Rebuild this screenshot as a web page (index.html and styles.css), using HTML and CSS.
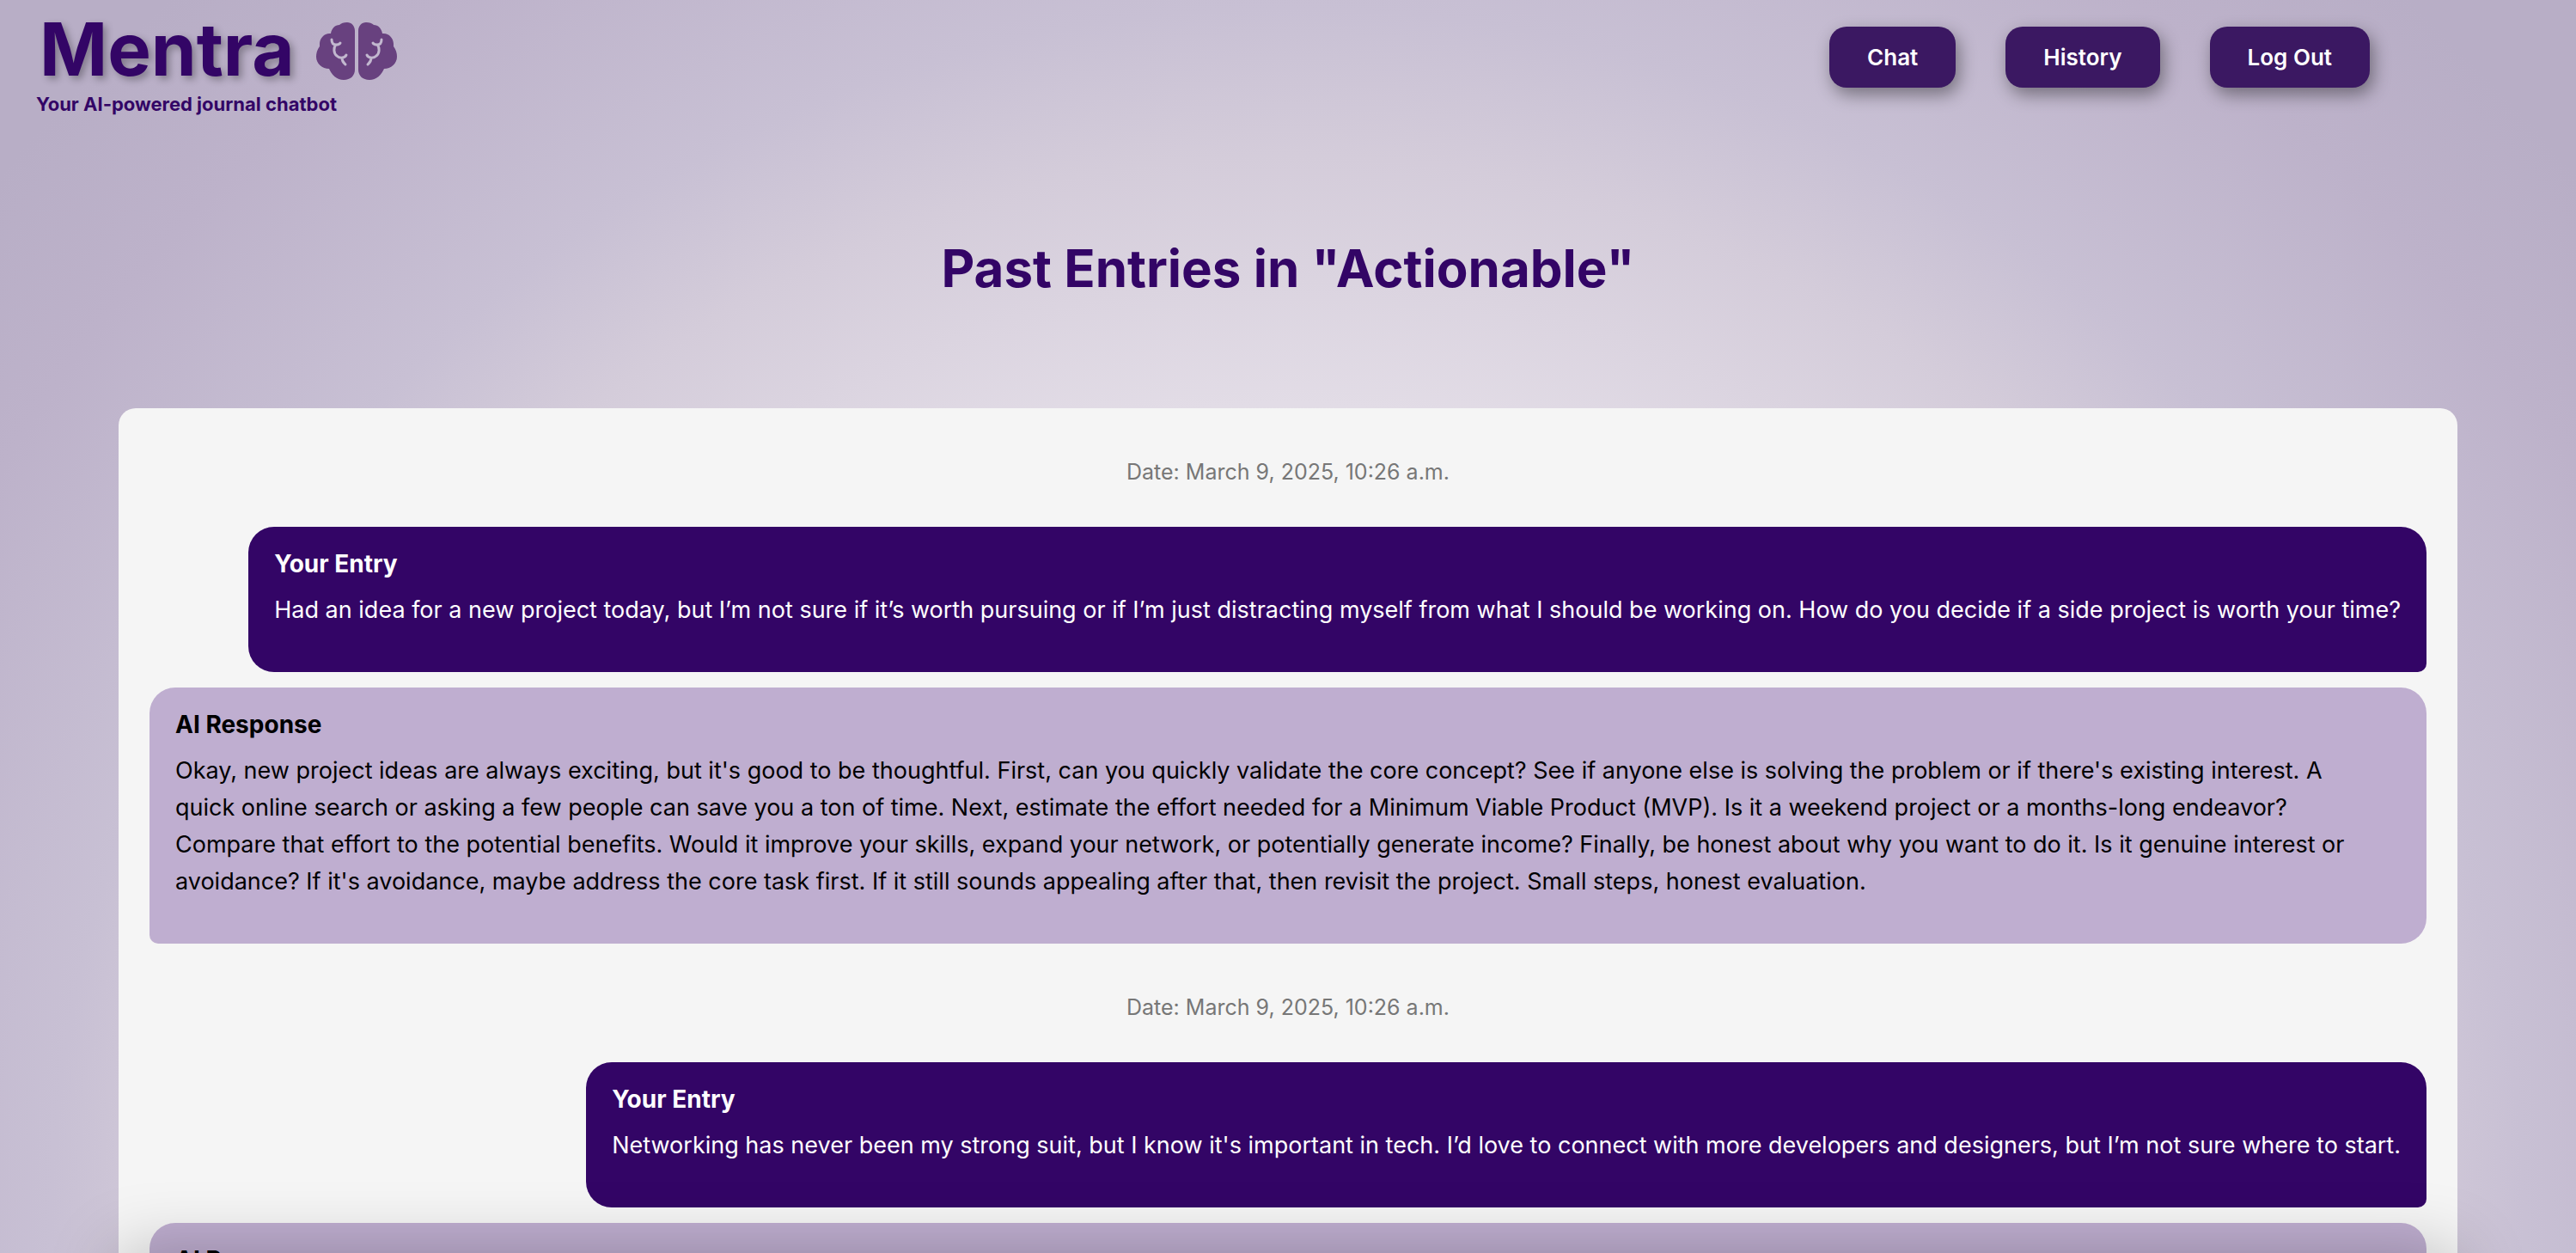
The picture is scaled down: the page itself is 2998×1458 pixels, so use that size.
FILE: index.html
```html
<!DOCTYPE html>
<html lang="en">
<head>
<meta charset="utf-8">
<meta name="viewport" content="width=device-width, initial-scale=1">
<title>Mentra</title>
<link rel="stylesheet" href="styles.css">
</head>
<body>
<header class="site-header">
  <div class="brand">
    <div class="brand-row">
      <span class="brand-name">Mentra</span>
      <svg class="brand-icon" viewBox="0 0 96 70" aria-hidden="true">
        <g id="half">
          <path fill="#68417f" d="M46 11C46 5 42 1 37 1C33 1 30 2 28 4C23 4 19 8 18 14C11 13 5 19 5 26V29C2 33 1 37 1 41C1 49 8 55 16 55C19 62 25 68 33 68C41 68 46 63 46 56Z"/>
          <path class="fold" d="M19 21C19 25 21 27 24 27C26 27 28 27 29 25M24 27C21 30 21 37 25 40C28 43 34 43 36 39M31 42C31 47 33 48 35 50"/>
        </g>
        <use href="#half" transform="translate(96 0) scale(-1 1)"/>
      </svg>
    </div>
    <p class="tagline">Your AI-powered journal chatbot</p>
  </div>
  <nav class="site-nav">
    <a class="nav-link" href="#">Chat</a>
    <a class="nav-link" href="#">History</a>
    <a class="nav-link" href="#">Log Out</a>
  </nav>
</header>
<main class="page">
  <h1 class="page-title">Past Entries in "Actionable"</h1>
  <section class="entries">
    <p class="date">Date: March 9, 2025, 10:26 a.m.</p>
    <article class="bubble bubble-user">
      <h2 class="bubble-title">Your Entry</h2>
      <p class="bubble-text">Had an idea for a new project today, but I’m not sure if it’s worth pursuing or if I’m just distracting myself from what I should be working on. How do you decide if a side project is worth your time?</p>
    </article>
    <article class="bubble bubble-ai">
      <h2 class="bubble-title">AI Response</h2>
      <p class="bubble-text">Okay, new project ideas are always exciting, but it's good to be thoughtful. First, can you quickly validate the core concept? See if anyone else is solving the problem or if there's existing interest. A quick online search or asking a few people can save you a ton of time. Next, estimate the effort needed for a Minimum Viable Product (MVP). Is it a weekend project or a months-long endeavor? Compare that effort to the potential benefits. Would it improve your skills, expand your network, or potentially generate income? Finally, be honest about why you want to do it. Is it genuine interest or avoidance? If it's avoidance, maybe address the core task first. If it still sounds appealing after that, then revisit the project. Small steps, honest evaluation.</p>
    </article>
    <p class="date">Date: March 9, 2025, 10:26 a.m.</p>
    <article class="bubble bubble-user">
      <h2 class="bubble-title">Your Entry</h2>
      <p class="bubble-text">Networking has never been my strong suit, but I know it's important in tech. I’d love to connect with more developers and designers, but I’m not sure where to start.</p>
    </article>
    <article class="bubble bubble-ai">
      <h2 class="bubble-title">AI Response</h2>
    </article>
  </section>
</main>
<div class="bottom-shade"></div>
</body>
</html>
```
FILE: styles.css
```css
* { box-sizing: border-box; }
body {
  margin: 0;
  min-height: 100vh;
  font-family: Inter, "Liberation Sans", sans-serif;
  color: #000;
  background: radial-gradient(circle at 50% 1450px, #eee8f1 0, #e2dce6 980px, #d4ccda 1270px, #c8c0d4 1440px, #bdb2ca 1750px, #b8aec6 1950px) fixed;
}
h1, h2, p { margin: 0; }

.site-header {
  display: flex;
  justify-content: space-between;
  align-items: flex-start;
  padding: 8px 240px 0 42px;
}
.brand-row { display: flex; align-items: center; gap: 24px; }
.brand-name {
  padding-left: 4px;
  font-size: 85px;
  line-height: 100px;
  font-weight: 700;
  color: #330566;
  text-shadow: 4px 4px 8px rgba(0, 0, 0, .3);
}
.brand-icon { width: 96px; height: 70px; margin-top: 4px; }
.fold { fill: none; stroke: #c2b8cf; stroke-width: 3; stroke-linecap: round; stroke-linejoin: round; }
.tagline { font-size: 22px; line-height: 26px; font-weight: 700; color: #330566; }

.site-nav { display: flex; gap: 58px; padding-top: 23px; }
.nav-link {
  padding: 18px 44px;
  border-radius: 20px;
  background: #3b1862;
  box-shadow: 4px 8px 20px rgba(0, 0, 0, .4);
  color: #fff;
  font-size: 26px;
  line-height: 35px;
  font-weight: 600;
  text-decoration: none;
}

.page { padding: 0 138px; }
.page-title {
  padding: 138px 0 123px;
  text-align: center;
  font-size: 60px;
  line-height: 80px;
  font-weight: 700;
  color: #330566;
}
.entries {
  display: flex;
  flex-direction: column;
  padding: 0 36px 48px;
  border-radius: 20px;
  background: #f5f5f5;
}
.date { padding: 54px 0 44px; text-align: center; font-size: 25px; line-height: 40px; color: #777; }
.bubble { padding: 23px 30px 51px; border-radius: 30px; }
.bubble-user {
  align-self: flex-end;
  background: #330566;
  color: #fff;
  border-bottom-right-radius: 10px;
}
.bubble-ai {
  margin-top: 18px;
  padding-right: 52px;
  background: #bfaed0;
  border-bottom-left-radius: 10px;
}
.bubble-title { margin-bottom: 12px; font-size: 28px; line-height: 40px; font-weight: 700; }
.bubble-text { font-size: 27px; line-height: 43px; }
.bottom-shade {
  position: fixed;
  left: 138px;
  right: 138px;
  top: 100%;
  height: 200px;
  box-shadow: 0 0 80px rgba(0, 0, 0, .25);
}
```
